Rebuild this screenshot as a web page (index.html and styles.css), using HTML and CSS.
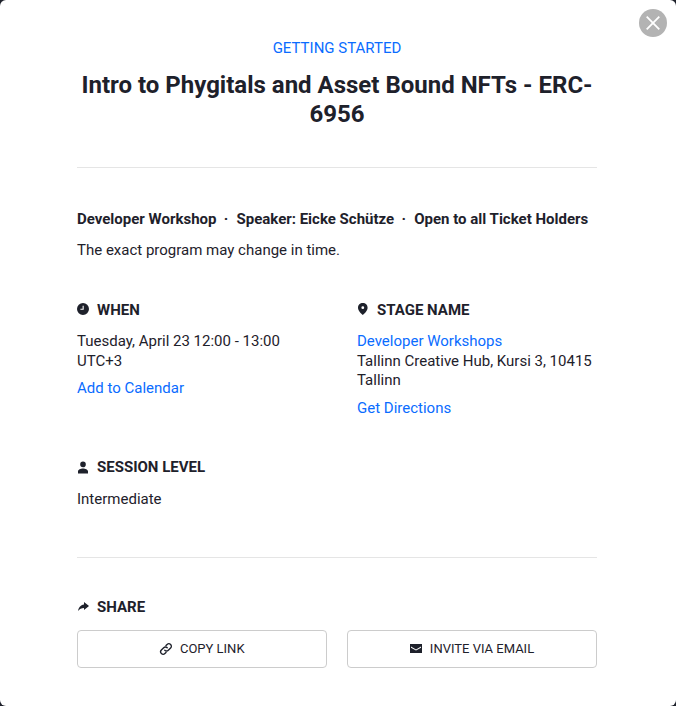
FILE: index.html
```html
<!DOCTYPE html>
<html lang="en">
<head>
<meta charset="utf-8">
<title>Intro to Phygitals and Asset Bound NFTs</title>
<link rel="stylesheet" href="styles.css">
</head>
<body>
<div class="modal">
  <button class="close" aria-label="Close">
    <svg viewBox="0 0 16 16" width="16" height="16"><path d="M1.700 1.700L14.300 14.300M14.300 1.700L1.700 14.300" stroke="#fff" stroke-width="1.800" fill="none"/></svg>
  </button>
  <header class="head">
    <div class="eyebrow">GETTING STARTED</div>
    <h1 class="title">Intro to Phygitals and Asset Bound NFTs - ERC-6956</h1>
  </header>
  <section class="intro">
    <div class="tags"><span>Developer Workshop</span><i>·</i><span>Speaker: Eicke Schütze</span><i>·</i><span>Open to all Ticket Holders</span></div>
    <p class="note">The exact program may change in time.</p>
  </section>
  <section class="details">
    <div class="cols">
      <div class="col">
        <h2 class="label"><svg class="ic up" viewBox="0 0 12 12"><path fill-rule="evenodd" d="M6 0a6 6 0 1 0 0 12a6 6 0 0 0 0-12zM6.700 2.800v4H3.400V5.700h2.200V2.800z"/></svg>WHEN</h2>
        <p class="txt">Tuesday, April 23 12:00 - 13:00<br>UTC+3</p>
        <a class="link gap" href="#">Add to Calendar</a>
      </div>
      <div class="col">
        <h2 class="label"><svg class="ic up" viewBox="0 0 12 12"><path fill-rule="evenodd" d="M5.800 0C3 0 1 2.100 1 4.700C1 7.400 3.700 10.300 5.800 12C7.900 10.300 10.600 7.400 10.600 4.700C10.600 2.100 8.600 0 5.800 0zM5.800 3.300a1.400 1.400 0 1 1 0 2.800a1.400 1.400 0 0 1 0-2.800z"/></svg>STAGE NAME</h2>
        <p class="txt"><a class="link" href="#">Developer Workshops</a><br>Tallinn Creative Hub, Kursi 3, 10415 Tallinn</p>
        <a class="link gap" href="#">Get Directions</a>
      </div>
    </div>
    <div class="level">
      <h2 class="label"><svg class="ic" viewBox="0 0 12 12"><path d="M6 .6a2.800 2.800 0 1 1 0 5.600a2.800 2.800 0 0 1 0-5.600zM1 12.400V10.300C1 8.400 3.700 7.400 6 7.400S11 8.400 11 10.300V12.400z"/></svg>SESSION LEVEL</h2>
      <p class="txt lvl">Intermediate</p>
    </div>
  </section>
  <section class="share">
    <h2 class="label"><svg class="ic" viewBox="0 0 12 12"><path d="M7 1L12 5L7 9V6.900C4.500 6.900 2.600 7.800 1 10C1.500 6.800 3.400 3.900 7 3.400z"/></svg>SHARE</h2>
    <div class="btns">
      <button class="btn"><svg class="bic" viewBox="0 0 14 14"><g fill="none" stroke="#1e212b" stroke-width="1.400" stroke-linecap="round"><path d="M5.800 8.200a2.400 2.400 0 0 0 3.500.1l2.300-2.300a2.450 2.450 0 0 0-3.500-3.500L7 3.600"/><path d="M8.200 5.800a2.400 2.400 0 0 0-3.500-.1L2.400 8a2.450 2.450 0 0 0 3.500 3.500L7 10.400"/></g></svg>COPY LINK</button>
      <button class="btn"><svg class="bic wide" viewBox="0 0 12 9"><path fill="#1e212b" fill-rule="evenodd" d="M0 0h12v9H0zM1 2.500L6 5.400L11 2.500V3.700L6 6.600L1 3.700z"/></svg>INVITE VIA EMAIL</button>
    </div>
  </section>
</div>
</body>
</html>
```
FILE: styles.css
```css
* { box-sizing: border-box; }
html, body { margin: 0; padding: 0; }
html { background: #1e212b; }
body { font-family: Roboto, "Liberation Sans", sans-serif; color: #1e212b; font-size: 15px; line-height: 19.5px; }
.modal { position: relative; width: 676px; height: 706px; padding: 38px 79px 0 77px; overflow: hidden; background: #fff; border-radius: 6px; }
.close { position: absolute; top: 9px; right: 9px; width: 28px; height: 28px; padding: 0; border: 0; border-radius: 50%; background: #b3b3b3; display: flex; align-items: center; justify-content: center; }
.head { text-align: center; padding-bottom: 38px; border-bottom: 1px solid #e5e5e5; }
.eyebrow { color: #0a6cff; font-size: 15px; line-height: 20px; }
.title { margin: 13px 0 0; font-size: 24px; line-height: 28.800px; font-weight: 700; }
.intro { padding-top: 41.400px; }
.tags { display: flex; align-items: center; font-weight: 700; font-size: 15px; line-height: 20px; }
.tags i { font-style: normal; margin: 0 8.250px 0 7.250px; }
.note { margin: 11px 0 0; line-height: 20px; }
.details { padding-top: 40px; padding-bottom: 47.500px; border-bottom: 1px solid #e5e5e5; }
.cols { display: grid; grid-template-columns: 280px 240px; }
.label { display: flex; align-items: center; margin: 0; font-size: 15px; line-height: 20px; font-weight: 700; }
.ic { width: 12px; height: 12px; margin-right: 8px; fill: #1e212b; flex: none; overflow: visible; }
.ic.up { margin-bottom: 2px; }
.txt { margin: 12.300px 0 0; }
.txt.lvl { margin-top: 13px; }
.link { color: #0a6cff; text-decoration: none; }
.gap { display: block; margin-top: 8px; }
.level { margin-top: 38.700px; }
.share { padding-top: 39px; }
.btns { display: flex; gap: 20px; margin-top: 13px; }
.btn { flex: 1; height: 38px; background: #fff; border: 1px solid #ccc; border-radius: 4px; color: #1e212b; font-family: inherit; font-size: 13px; display: flex; align-items: center; justify-content: center; padding: 0; }
.bic { width: 14px; height: 14px; margin-right: 6.500px; }
.bic.wide { width: 12px; height: 9px; margin-right: 8px; }
```
